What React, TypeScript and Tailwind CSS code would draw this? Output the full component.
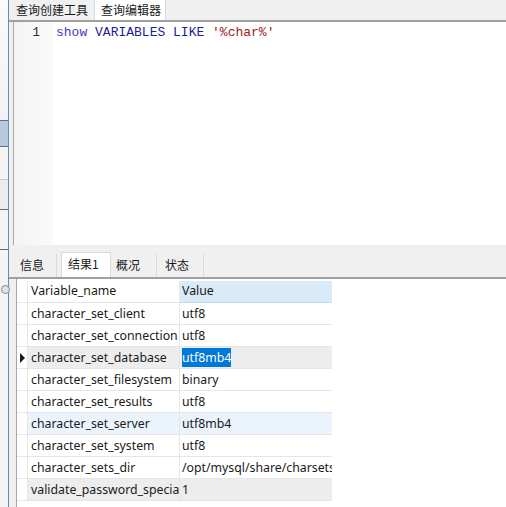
import React from 'react';

const rows = [
  { name: 'character_set_client', value: 'utf8', bg: 'bg-white' },
  { name: 'character_set_connection', value: 'utf8', bg: 'bg-white' },
  { name: 'character_set_database', value: 'utf8mb4', bg: 'bg-[#ededed]', current: true },
  { name: 'character_set_filesystem', value: 'binary', bg: 'bg-white' },
  { name: 'character_set_results', value: 'utf8', bg: 'bg-white' },
  { name: 'character_set_server', value: 'utf8mb4', bg: 'bg-[#ebf4fd]' },
  { name: 'character_set_system', value: 'utf8', bg: 'bg-white' },
  { name: 'character_sets_dir', value: '/opt/mysql/share/charsets/', bg: 'bg-white' },
  { name: 'validate_password_special_char_count', value: '1', bg: 'bg-[#ededed]' },
];

const cjk = { fontFamily: '"Noto Sans CJK SC", "Noto Sans", sans-serif' };
const ui = { fontFamily: '"Noto Sans", "Noto Sans CJK SC", sans-serif' };
const mono = { fontFamily: '"Liberation Mono", monospace' };

export default function App() {
  return (
    <div className="flex w-[506px] h-[507px] bg-white overflow-hidden">
      {/* sliver of the left panel */}
      <div className="w-[9px] shrink-0 flex flex-col bg-[#f5f6f8] border-r border-[#6d8aa8]">
        <div className="h-[120px] bg-gradient-to-b from-[#fafafa] to-[#f0f2f5]" />
        <div className="h-[27px] bg-[#b7c9df] border-y border-[#5a7088]" />
        <div className="h-[33px] bg-[#f4f4f4] border-b border-[#c8c8c8]" />
        <div className="h-[30px] bg-[#ececec] border-b border-[#5a7088]" />
        <div className="h-[40px] bg-[#f4f4f4] border-b border-[#5a7088]" />
        <div className="flex-1 bg-[#f4f4f4] relative">
          <div className="absolute left-[1px] top-[35px] w-[9px] h-[9px] rounded-full border border-[#7a8898] bg-[#dde3ea]" />
        </div>
      </div>

      <div className="flex-1 flex flex-col bg-[#f0f0f0]">
        {/* top tabs */}
        <div className="h-[22px] shrink-0 flex items-end pl-[4px] gap-[4px] border-b-2 border-[#a0a0a0]" style={cjk}>
          <div className="h-[20px] w-[77px] pl-[3px] flex items-center text-[12px] text-[#1a1a1a]">查询创建工具</div>
          <div className="h-[21px] w-[72px] pl-[6px] flex items-center text-[12px] text-[#1a1a1a] bg-white border-x border-t border-[#d9d9d9]">查询编辑器</div>
        </div>

        {/* editor */}
        <div className="h-[223px] shrink-0 flex bg-white ml-[4px] border-l border-[#a8a8a8]">
          <div className="w-[39px] shrink-0 bg-gradient-to-r from-[#f4f4f4] to-[#fafafa] text-right pr-[13px] pt-[3px] text-[13px] leading-[16px] text-[#333]" style={mono}>
            1
          </div>
          <div className="pl-[3px] pt-[3px] text-[13px] leading-[16px] whitespace-pre" style={mono}>
            <span className="text-[#3c3cc8]">show</span>{' '}
            <span className="text-[#1c1c98]">VARIABLES LIKE</span>{' '}
            <span className="text-[#9c1b1b]">'%char%'</span>
          </div>
        </div>

        {/* bottom tabs */}
        <div className="h-[34px] shrink-0 flex items-end pl-[7px] border-b-2 border-[#a0a0a0]" style={cjk}>
          <div className="h-[23px] w-[41px] flex items-center pl-[4px] pb-[2px] text-[12px] text-[#1a1a1a] border-r border-[#dadada]">信息</div>
          <div className="h-[25px] w-[50px] ml-[4px] flex items-center pl-[6px] pb-[3px] text-[12px] text-[#1a1a1a] bg-white border-x border-t border-[#d9d9d9]">结果1</div>
          <div className="h-[23px] w-[46px] flex items-center pl-[5px] pb-[2px] text-[12px] text-[#1a1a1a] border-r border-[#dadada]">概况</div>
          <div className="h-[23px] w-[47px] flex items-center pl-[8px] pb-[2px] text-[12px] text-[#1a1a1a] border-r border-[#dadada]">状态</div>
        </div>

        {/* result grid */}
        <div className="flex-1 bg-white ml-[7px] border-l border-[#a8a8a8] pt-[2px]" style={ui}>
          <div className="w-[315px] text-[12.3px] text-[#1a1a1a]">
            <div className="flex h-[22px]">
              <div className="w-[11px] border-r border-b border-[#e6e6e6]" />
              <div className="w-[152px] flex items-center pl-[3px] border-r border-b border-[#e6e6e6]">Variable_name</div>
              <div className="w-[152px] flex items-center pl-[2px] bg-[#d9eaf9] border-b border-[#c6d9ec]">Value</div>
            </div>
            {rows.map((r) => (
              <div key={r.name} className={`flex h-[22px] ${r.bg}`}>
                <div className="w-[11px] flex items-center justify-center bg-white border-r border-b border-[#e6e6e6]">
                  {r.current && (
                    <svg width="5" height="10" viewBox="0 0 5 10">
                      <path d="M0 0 L5 5 L0 10 Z" fill="#1a1a1a" />
                    </svg>
                  )}
                </div>
                <div className="w-[152px] pl-[3px] leading-[21px] border-r border-b border-[#e6e6e6] overflow-hidden whitespace-nowrap">
                  {r.name}
                </div>
                <div className="w-[152px] pl-[2px] leading-[21px] border-b border-[#e6e6e6] overflow-hidden whitespace-nowrap">
                  {r.current ? (
                    <span className="bg-[#0078d7] text-white py-[1px]">{r.value}</span>
                  ) : (
                    r.value
                  )}
                </div>
              </div>
            ))}
          </div>
        </div>
      </div>
    </div>
  );
}
